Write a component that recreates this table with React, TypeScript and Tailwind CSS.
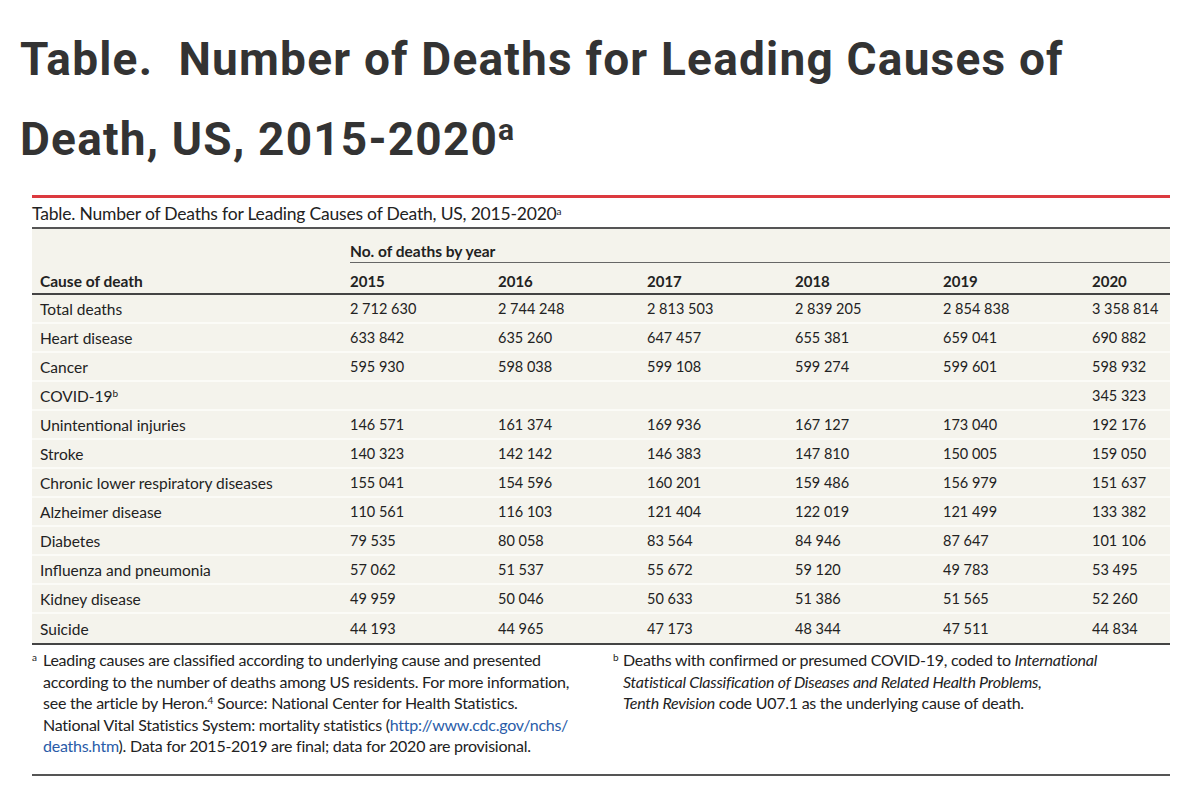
import React from "react";

type Row = { cause: React.ReactNode; values: string[] };

const years = ["2015", "2016", "2017", "2018", "2019", "2020"];

const rows: Row[] = [
  { cause: "Total deaths", values: ["2 712 630", "2 744 248", "2 813 503", "2 839 205", "2 854 838", "3 358 814"] },
  { cause: "Heart disease", values: ["633 842", "635 260", "647 457", "655 381", "659 041", "690 882"] },
  { cause: "Cancer", values: ["595 930", "598 038", "599 108", "599 274", "599 601", "598 932"] },
  {
    cause: (
      <>
        COVID-19<sup className="text-[10px]">b</sup>
      </>
    ),
    values: ["", "", "", "", "", "345 323"],
  },
  { cause: "Unintentional injuries", values: ["146 571", "161 374", "169 936", "167 127", "173 040", "192 176"] },
  { cause: "Stroke", values: ["140 323", "142 142", "146 383", "147 810", "150 005", "159 050"] },
  { cause: "Chronic lower respiratory diseases", values: ["155 041", "154 596", "160 201", "159 486", "156 979", "151 637"] },
  { cause: "Alzheimer disease", values: ["110 561", "116 103", "121 404", "122 019", "121 499", "133 382"] },
  { cause: "Diabetes", values: ["79 535", "80 058", "83 564", "84 946", "87 647", "101 106"] },
  { cause: "Influenza and pneumonia", values: ["57 062", "51 537", "55 672", "59 120", "49 783", "53 495"] },
  { cause: "Kidney disease", values: ["49 959", "50 046", "50 633", "51 386", "51 565", "52 260"] },
  { cause: "Suicide", values: ["44 193", "44 965", "47 173", "48 344", "47 511", "44 834"] },
];

const cols = "grid grid-cols-[318px_148px_149px_148px_148px_149px_1fr]";

const App: React.FC = () => {
  return (
    <main className="min-h-screen bg-white px-5 pt-[19px] text-[#222]">
      <h1 className="font-['Roboto',sans-serif] text-[46px] font-bold leading-[80px] tracking-[1.2px] text-[#333]">
        Table.&nbsp; Number of Deaths for Leading Causes of
        <br />
        Death, US, 2015-2020<sup className="text-[30px]">a</sup>
      </h1>

      <section className="ml-3 mr-[10px] mt-[16px] font-['Lato',sans-serif]">
        <div className="h-[3px] bg-[#dc3a3f]" />
        <p className="mt-[3px] text-[17.5px] leading-[26px] tracking-[-0.2px]">
          Table. Number of Deaths for Leading Causes of Death, US, 2015-2020
          <sup className="text-[10px]">a</sup>
        </p>

        <div className="border-t-2 border-[#555] bg-[#f4f3ec] text-[14.5px]">
          <div className={cols}>
            <div />
            <div className="col-span-6 border-b-[1.5px] border-[#666] pb-[1px] pt-[12px] text-[15.5px] font-bold leading-[20px]">
              No. of deaths by year
            </div>
          </div>
          <div className={`${cols} border-b-2 border-[#444] font-bold`}>
            <div className="pb-[2px] pl-2 pt-[8px] text-[15.5px] leading-[20px]">Cause of death</div>
            {years.map((y) => (
              <div key={y} className="pb-[2px] pt-[8px] text-[15px] leading-[20px]">
                {y}
              </div>
            ))}
          </div>
          {rows.map((r, i) => (
            <div
              key={i}
              className={`${cols} h-[29px] items-center leading-[20px] ${
                i < rows.length - 1 ? "border-b-2 border-[#fbfbf7]" : ""
              }`}
            >
              <div className="pl-2 text-[15.5px]">{r.cause}</div>
              {r.values.map((v, j) => (
                <div key={j}>{v}</div>
              ))}
            </div>
          ))}
        </div>

        <div className="grid grid-cols-[581px_1fr] border-t-2 border-[#444] pb-[17px] pt-[4px] text-[16px] leading-[21.5px] tracking-[-0.25px] whitespace-nowrap">
          <p className="relative pl-[11px]">
            <sup className="absolute left-0 top-[8px] text-[10px]">a</sup>
            Leading causes are classified according to underlying cause and presented
            <br />
            according to the number of deaths among US residents. For more information,
            <br />
            see the article by Heron.<sup className="text-[10px]">4</sup> Source: National Center for
            Health Statistics.
            <br />
            National Vital Statistics System: mortality statistics (
            <span className="text-[#2a5ca8]">http://www.cdc.gov/nchs/</span>
            <br />
            <span className="text-[#2a5ca8]">deaths.htm</span>). Data for 2015-2019 are final; data for
            2020 are provisional.
          </p>
          <p className="relative pl-[10px]">
            <sup className="absolute left-0 top-[8px] text-[10px]">b</sup>
            Deaths with confirmed or presumed COVID-19, coded to <i>International</i>
            <br />
            <i>Statistical Classification of Diseases and Related Health Problems,</i>
            <br />
            <i>Tenth Revision</i> code U07.1 as the underlying cause of death.
          </p>
        </div>
        <div className="h-[2px] bg-[#555]" />
      </section>
    </main>
  );
};

export default App;
